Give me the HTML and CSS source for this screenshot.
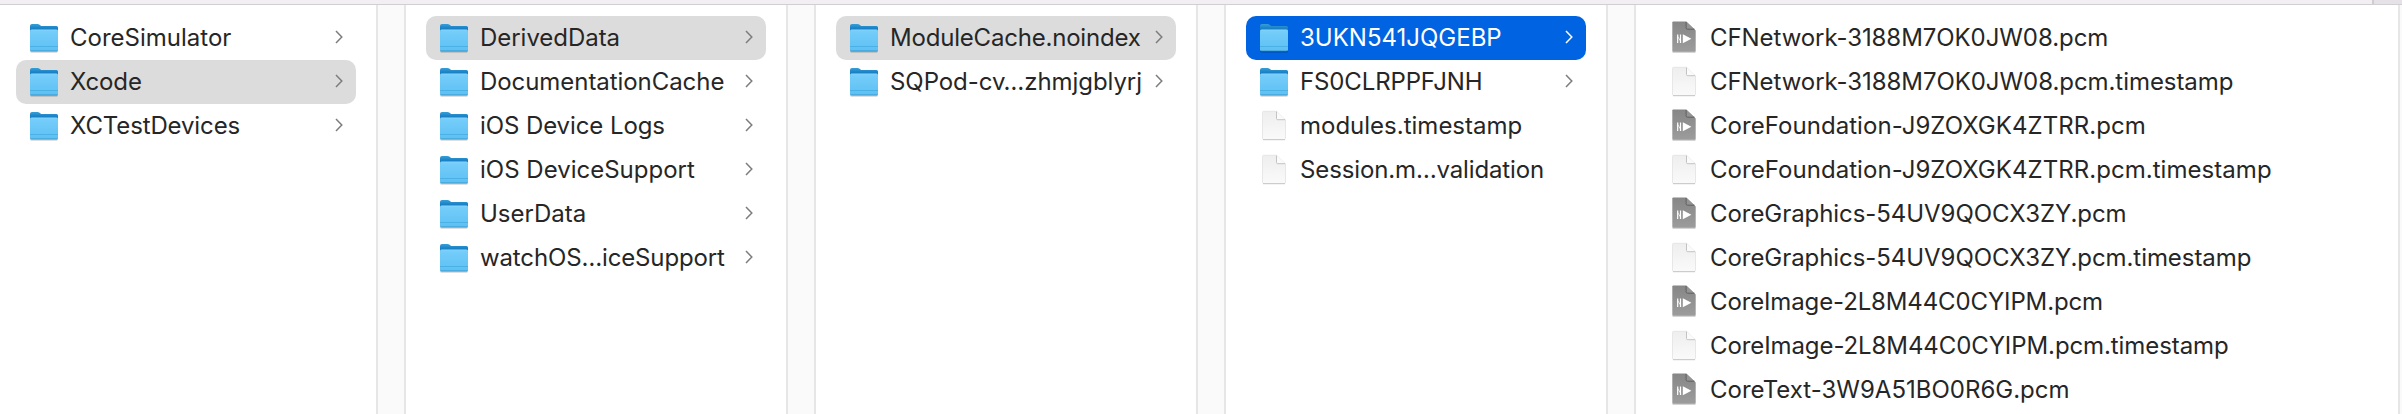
FILE: index.html
```html
<!DOCTYPE html>
<html lang="en">
<head>
<meta charset="utf-8">
<title>Finder</title>
<link rel="stylesheet" href="styles.css">
</head>
<body>
<svg class="defs" width="0" height="0" aria-hidden="true">
  <defs>
    <linearGradient id="gBack" x1="0" y1="0" x2="0" y2="1"><stop offset="0" stop-color="#369fd9"/><stop offset=".35" stop-color="#1a82c4"/></linearGradient>
    <linearGradient id="gFront" x1="0" y1="0" x2="0" y2="1"><stop offset="0" stop-color="#76cefb"/><stop offset="1" stop-color="#5dc0f3"/></linearGradient>
    <linearGradient id="gDoc" x1="0" y1="0" x2="0" y2="1"><stop offset="0" stop-color="#eeeeee"/><stop offset="1" stop-color="#fafafa"/></linearGradient>
    <linearGradient id="gPcm" x1="0" y1="0" x2="0" y2="1"><stop offset="0" stop-color="#868686"/><stop offset="1" stop-color="#9c9c9c"/></linearGradient>
    <symbol id="folder" viewBox="0 0 32 44">
      <path d="M2.2 34.200h27.600v1.400q0 1-1 1H3.200q-1 0-1-1z" fill="#000" opacity=".25"/>
      <path d="M2 10q0-2 2-2h5.500q1.200 0 2.100.8l.9.700q.7.500 1.700.500H28.500q1.500 0 1.500 1.500V20H2z" fill="url(#gBack)"/>
      <path d="M2 15.300q0-1.500 1.500-1.500h25q1.500 0 1.500 1.500V33.500q0 1.500-1.500 1.500h-25Q2 35 2 33.500z" fill="url(#gFront)"/>
      <path d="M2.300 14.700q.4-.7 1.200-.7h25q.9 0 1.200.7" fill="none" stroke="#8cdafd" stroke-width=".7"/>
      <path d="M2 30.500h28" stroke="#45abe0" stroke-width=".8"/>
      <path d="M2.300 34.200q.4.700 1.300.700h24.800q.9 0 1.300-.7" fill="none" stroke="#3995c9" stroke-width=".8"/>
    </symbol>
    <symbol id="doc" viewBox="0 0 32 44">
      <path d="M4.500 8.500q0-1.200 1.200-1.200H18.500L27.500 16V34.300q0 1.200-1.200 1.200H5.700q-1.200 0-1.200-1.200z" fill="url(#gDoc)" stroke="#e2e2e2" stroke-width=".8"/>
      <path d="M5 35.700h22" stroke="#c6c6c6" stroke-width="1"/>
      <path d="M18.500 7.500L27.200 15.700H19.700q-1.200 0-1.200-1.200z" fill="#fbfbfb"/>
      <path d="M18.500 7.500V14.400q0 1.300 1.200 1.300H27.200" fill="none" stroke="#bdbdbd" stroke-width=".9"/>
    </symbol>
    <symbol id="pcm" viewBox="0 0 32 44">
      <path d="M4.500 36h23" stroke="#c2c2c2" stroke-width="1.400"/>
      <path d="M4.300 6.500q0-1 1-1H18.200L27.700 14.500V34.800q0 1-1 1H5.300q-1 0-1-1z" fill="url(#gPcm)"/>
      <path d="M18.200 5.500V11.600q0 1.400 1.400 1.400h6.600z" fill="#949494"/>
      <path d="M18.100 6V11.700q0 1.500 1.500 1.500h6.900" fill="none" stroke="#606060" stroke-width="1"/>
      <path d="M9.700 18.400v8.600M12.500 18.400v8.600" stroke="#fff" stroke-width="1.200"/>
      <path d="M9.700 20.500L12.500 25" stroke="#fff" stroke-width=".8"/>
      <path d="M14.800 18.200L23.400 22.700 14.800 27.200z" fill="#fff"/>
    </symbol>
    <symbol id="chev" viewBox="0 0 8 14"><path d="M1 1l5.800 6L1 13" fill="none" stroke="currentColor" stroke-width="1.500"/></symbol>
  </defs>
</svg>
<div class="topbar"><div class="topbar-end"></div></div>
<main class="browser" id="browser"></main>
<script src="app.js"></script>
</body>
</html>
```
FILE: styles.css
```css
* { box-sizing: border-box; }
body { margin: 0; width: 2402px; height: 414px; overflow: hidden; background: #fff; color: #262626; font-family: Inter, sans-serif; font-size: 24px; display: flex; flex-direction: column; }
.defs { position: absolute; }
.topbar { height: 5px; flex: none; background: #f1eff2; border-bottom: 1px solid #d1cfd2; display: flex; justify-content: flex-end; }
.topbar-end { width: 30px; background: #e4e2e6; border-left: 2px solid #cfcdd0; }
.browser { flex: 1; display: flex; min-height: 0; }
.pane { flex: none; width: 380px; padding: 11px 20px 0; background: #fff; }
.pane.first { width: 376px; padding-left: 16px; }
.pane.last { width: 762px; }
.gutter { flex: none; width: 30px; background: #fafafa; border: solid #e6e6e6; border-width: 0 2px; }
.gutter:last-child { width: 4px; border-right: 0; }
.row { height: 44px; display: flex; align-items: center; padding: 0 13.5px 0 12px; border-radius: 10px; }
.row.sel { background: #dcdcdc; }
.row.active { background: #0063e1; color: #fff; }
.icon { width: 32px; height: 44px; flex: none; margin-right: 10px; }
.name { flex: 1; white-space: nowrap; padding-bottom: 2px; }
.chev { width: 8px; height: 14px; flex: none; color: #7d7d7d; margin-bottom: 2px; }
.active .chev { color: #fff; }
```
FILE: app.js
```js
// Each entry: name, icon, letter spacing in px, row state
const columns = [
  [['CoreSimulator','folder',0],['Xcode','folder',-0.15,'sel'],['XCTestDevices','folder',-0.13]],
  [['DerivedData','folder',-0.04,'sel'],['DocumentationCache','folder',-0.06],['iOS Device Logs','folder',-0.09],['iOS DeviceSupport','folder',0],['UserData','folder',0],['watchOS…iceSupport','folder',-0.14]],
  [['ModuleCache.noindex','folder',-0.2,'sel'],['SQPod-cv…zhmjgblyrj','folder',-0.06]],
  [['3UKN541JQGEBP','folder',0,'active'],['FS0CLRPPFJNH','folder',-0.13],['modules.timestamp','doc',0],['Session.m…validation','doc',-0.13]],
  [['CFNetwork-3188M7OK0JW08.pcm','pcm',-0.07],['CFNetwork-3188M7OK0JW08.pcm.timestamp','doc',-0.06],['CoreFoundation-J9ZOXGK4ZTRR.pcm','pcm',0.05],['CoreFoundation-J9ZOXGK4ZTRR.pcm.timestamp','doc',0.05],['CoreGraphics-54UV9QOCX3ZY.pcm','pcm',-0.06],['CoreGraphics-54UV9QOCX3ZY.pcm.timestamp','doc',-0.06],['CoreImage-2L8M44C0CYIPM.pcm','pcm',-0.13],['CoreImage-2L8M44C0CYIPM.pcm.timestamp','doc',-0.09],['CoreText-3W9A51BO0R6G.pcm','pcm',0]]
];
const gutter = '<div class="gutter"></div>';
document.getElementById('browser').innerHTML = columns.map((c, i) =>
  `<section class="pane ${i === 0 ? 'first' : i === 4 ? 'last' : ''}">` + c.map(([n, icon, ls, state]) =>
    `<div class="row ${state || ''}"><svg class="icon"><use href="#${icon}"/></svg><span class="name" style="letter-spacing:${ls}px">${n}</span>${icon === 'folder' ? '<svg class="chev"><use href="#chev"/></svg>' : ''}</div>`).join('') + '</section>').join(gutter) + gutter;
```
